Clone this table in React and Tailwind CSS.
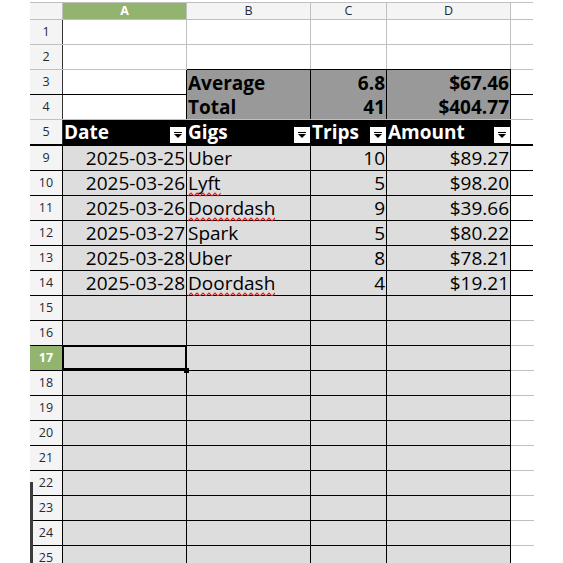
import React from "react";

const widths = ["w-[124px]", "w-[124px]", "w-[76px]", "w-[124px]"];
const font = { fontFamily: '"Open Sans", "DejaVu Sans", sans-serif' };

const FilterBtn = () => (
  <span className="absolute right-[1px] bottom-[1px] w-[16px] h-[16px] bg-white flex items-center justify-center">
    <svg width="10" height="8" viewBox="0 0 10 8">
      <rect x="1" y="1" width="8" height="1" fill="#000" />
      <polygon points="1,3 9,3 5,7" fill="#000" />
    </svg>
  </span>
);

// spell-check squiggle
const Wavy = ({ children }) => (
  <span className="relative">
    {children}
    <svg className="absolute left-0 -bottom-[3px] w-full h-[5px]" height="5">
      <defs>
        <pattern id="squig" width="6" height="5" patternUnits="userSpaceOnUse">
          <path d="M0 4 L3 1 L6 4" stroke="#e01b1b" strokeWidth="1.2" fill="none" />
        </pattern>
      </defs>
      <rect width="100%" height="5" fill="url(#squig)" />
    </svg>
  </span>
);

const RowHead = ({ n, active, dark }) => (
  <div
    className={`w-[33px] h-full shrink-0 flex items-center justify-center text-[12.5px] border-r ${
      dark ? "border-r-black" : "border-r-[#333]"
    } ${active ? "bg-[#93b46f] text-white font-bold" : "bg-[#f4f4f4] text-[#1f2937]"}`}
  >
    {n}
  </div>
);

const data = [
  [9, "2025-03-25", "Uber", "10", "$89.27", false],
  [10, "2025-03-26", "Lyft", "5", "$98.20", true],
  [11, "2025-03-26", "Doordash", "9", "$39.66", true],
  [12, "2025-03-27", "Spark", "5", "$80.22", false],
  [13, "2025-03-28", "Uber", "8", "$78.21", false],
  [14, "2025-03-28", "Doordash", "4", "$19.21", true],
];

const DataRow = ({ n, cells, wavy }) => (
  <div className="flex h-[25px] border-b border-b-black">
    <div className="w-[33px] shrink-0 flex items-center justify-center text-[12.5px] bg-[#f4f4f4] text-[#1f2937] border-r border-r-black">
      {n}
    </div>
    {[0, 1, 2, 3].map((i) => (
      <div
        key={i}
        className={`${widths[i]} shrink-0 bg-[#dddddd] border-r border-r-black flex items-end pb-[1px] text-[19px] leading-[22px] text-black whitespace-nowrap ${
          i === 1 ? "justify-start pl-[1px]" : "justify-end pr-[1px]"
        }`}
      >
        {i === 1 && wavy ? <Wavy>{cells[i]}</Wavy> : cells[i]}
      </div>
    ))}
    <div className="w-[23px] shrink-0 bg-white" />
  </div>
);

const EmptyRow = ({ n, active }) => (
  <div className={`flex h-[25px] border-b border-b-black relative ${active ? "z-10" : ""}`}>
    <RowHead n={n} active={active} dark />
    {[0, 1, 2, 3].map((i) => (
      <div key={i} className={`${widths[i]} shrink-0 bg-[#dddddd] border-r border-r-black relative ${active && i === 0 ? "z-10" : ""}`}>
        {active && i === 0 && (
          <>
            <div className="absolute -left-[1px] -top-[1px] w-[125px] h-[25px] border-2 border-black" />
            <div className="absolute -right-[3px] -bottom-[3px] w-[5px] h-[5px] bg-black" />
          </>
        )}
      </div>
    ))}
    <div className="w-[23px] shrink-0 bg-white border-b border-b-[#c0c0c0] -mb-[1px]" />
  </div>
);

export default function App() {
  return (
    <div className="w-[563px] h-[563px] bg-white overflow-hidden relative" style={font}>
      <div className="pl-[30px] pt-[2px]">
        <div className="w-[503px]">
          {/* column headers */}
          <div className="flex h-[18px] border-t border-t-[#c0c0c0] border-b border-b-[#c0c0c0] text-[12.5px]">
            <div className="w-[33px] shrink-0 bg-[#f4f4f4] border-r border-r-[#c0c0c0]" />
            <div className="w-[124px] shrink-0 bg-[#93b46f] text-white font-bold flex items-center justify-center border-r border-r-[#c0c0c0]">
              A
            </div>
            <div className="w-[124px] shrink-0 bg-[#f4f4f4] text-[#1f2937] flex items-center justify-center border-r border-r-[#c0c0c0]">
              B
            </div>
            <div className="w-[76px] shrink-0 bg-[#f4f4f4] text-[#1f2937] flex items-center justify-center border-r border-r-[#c0c0c0]">
              C
            </div>
            <div className="w-[124px] shrink-0 bg-[#f4f4f4] text-[#1f2937] flex items-center justify-center border-r border-r-[#c0c0c0]">
              D
            </div>
            <div className="w-[23px] shrink-0 bg-white" />
          </div>

          {/* rows 1-2 */}
          {[1, 2].map((n) => (
            <div key={n} className="flex h-[25px] border-b border-b-[#c0c0c0]">
              <RowHead n={n} />
              <div className="w-[124px] shrink-0 border-r border-r-[#c0c0c0]" />
              <div className="w-[124px] shrink-0 border-r border-r-[#c0c0c0]" />
              <div className="w-[76px] shrink-0 border-r border-r-[#c0c0c0]" />
              <div className="w-[124px] shrink-0 border-r border-r-[#c0c0c0]" />
              <div className="w-[23px] shrink-0" />
            </div>
          ))}

          {/* rows 3-4 */}
          {[
            [3, "Average", "6.8", "$67.46"],
            [4, "Total", "41", "$404.77"],
          ].map(([n, label, c, d]) => (
            <div key={n} className={`flex h-[25px] border-b ${n === 3 ? "border-b-black" : "border-b-[#c0c0c0]"}`}>
              <RowHead n={n} />
              <div className="w-[124px] shrink-0 border-r border-r-black" />
              <div className={`w-[124px] shrink-0 bg-[#999999] border-r border-r-black ${n === 3 ? "border-t border-t-black -mt-[1px] h-[26px]" : ""} flex items-end pb-[1px] pl-[1px] text-[19px] leading-[22px] font-bold text-black`}>
                {label}
              </div>
              <div className={`w-[76px] shrink-0 bg-[#999999] border-r border-r-black ${n === 3 ? "border-t border-t-black -mt-[1px] h-[26px]" : ""} flex items-end justify-end pb-[1px] pr-[1px] text-[19px] leading-[22px] font-bold text-black`}>
                {c}
              </div>
              <div className={`w-[124px] shrink-0 bg-[#999999] border-r border-r-black ${n === 3 ? "border-t border-t-black -mt-[1px] h-[26px]" : ""} flex items-end justify-end pb-[1px] pr-[1px] text-[19px] leading-[22px] font-bold text-black`}>
                {d}
              </div>
              <div className="w-[23px] shrink-0" />
            </div>
          ))}

          {/* row 5 header */}
          <div className="flex h-[24px]">
            <RowHead n={5} />
            {["Date", "Gigs", "Trips", "Amount"].map((t, i) => (
              <div
                key={t}
                className={`${widths[i]} shrink-0 bg-black relative flex items-end pb-[1px] pl-[1px] text-[19px] leading-[22px] font-bold text-white`}
              >
                {t}
                <FilterBtn />
              </div>
            ))}
            <div className="w-[23px] shrink-0" />
          </div>
          <div className="h-[2px] bg-black" />

          {data.map(([n, ...rest]) => (
            <DataRow key={n} n={n} cells={rest.slice(0, 4)} wavy={rest[4]} />
          ))}

          {[15, 16, 17, 18, 19, 20, 21, 22, 23, 24, 25].map((n) => (
            <EmptyRow key={n} n={n} active={n === 17} />
          ))}
        </div>
      </div>
      <div className="absolute left-[30px] top-[482px] w-[3px] h-[90px] bg-[#3c3c3c]" />
    </div>
  );
}
